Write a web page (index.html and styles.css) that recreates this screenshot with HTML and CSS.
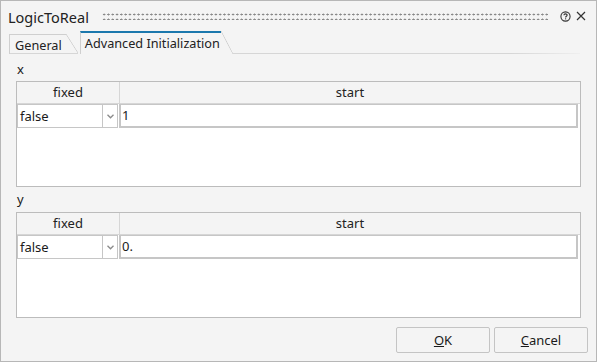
FILE: index.html
```html
<!DOCTYPE html>
<html lang="en">
<head>
  <meta charset="UTF-8">
  <title>LogicToReal</title>
  <link rel="stylesheet" href="styles.css">
</head>
<body>

  <div class="dialog">
    <div class="titlebar">
      <span class="title">LogicToReal</span>
      <span class="grip"></span>
      <svg class="help" width="11" height="11" viewBox="0 0 11 11">
        <circle cx="5.5" cy="5.5" r="4.6" fill="none" stroke="#333" stroke-width="1.1"/>
        <path d="M3.9 4.3 C3.9 3.3 4.6 2.9 5.5 2.9 C6.4 2.9 7.1 3.4 7.1 4.2 C7.1 5.2 5.6 5.3 5.6 6.4" fill="none" stroke="#333" stroke-width="1.1"/>
        <rect x="5.05" y="7.3" width="1.1" height="1.1" fill="#333"/>
      </svg>
      <svg class="close" width="10" height="10" viewBox="0 0 10 10">
        <path d="M1 1 L9 9 M9 1 L1 9" stroke="#333" stroke-width="1.2"/>
      </svg>
    </div>

    <div class="tabs">
      <div class="tab">General</div>
      <div class="tab active">Advanced Initialization</div>
      <div class="tabline"></div>
    </div>

    <div class="content">
      <div class="section">
        <div class="label">x</div>
        <div class="table">
          <div class="thead">
            <div class="th">fixed</div>
            <div class="th">start</div>
          </div>
          <div class="tr">
            <div class="combo">
              <span class="combo-text">false</span>
              <span class="combo-arrow">
                <svg width="7" height="5" viewBox="0 0 7 5"><path d="M0.5 0.8 L3.5 3.8 L6.5 0.8" fill="none" stroke="#8a8a8a" stroke-width="1.3"/></svg>
              </span>
            </div>
            <div class="input">1</div>
          </div>
        </div>
      </div>

      <div class="section">
        <div class="label">y</div>
        <div class="table">
          <div class="thead">
            <div class="th">fixed</div>
            <div class="th">start</div>
          </div>
          <div class="tr">
            <div class="combo">
              <span class="combo-text">false</span>
              <span class="combo-arrow">
                <svg width="7" height="5" viewBox="0 0 7 5"><path d="M0.5 0.8 L3.5 3.8 L6.5 0.8" fill="none" stroke="#8a8a8a" stroke-width="1.3"/></svg>
              </span>
            </div>
            <div class="input">0.</div>
          </div>
        </div>
      </div>
    </div>

    <div class="buttons">
      <button><u>O</u>K</button>
      <button><u>C</u>ancel</button>
    </div>
  </div>

</body>
</html>
```

FILE: styles.css
```css
body {
  margin: 0;
  font-family: "Noto Sans", "Liberation Sans", sans-serif;
  font-size: 13px;
  color: #1a1a1a;
}

.dialog {
  width: 597px;
  height: 362px;
  box-sizing: border-box;
  border: 1px solid #b7b7b7;
  background: #f4f4f4;
  display: flex;
  flex-direction: column;
}

.titlebar {
  height: 30px;
  display: flex;
  align-items: center;
  padding: 0 10px 0 7px;
}

.title {
  font-size: 14.5px;
  color: #222;
  margin-top: 2px;
}

.grip {
  flex: 1;
  height: 7px;
  margin: 1px 12px 0 13px;
  background-image: radial-gradient(circle, #888 0.9px, transparent 1.1px);
  background-size: 4.3px 5px;
  background-position: 0 -1px;
}

.help {
  margin-right: 5px;
}

.tabs {
  height: 23px;
  display: flex;
  align-items: flex-end;
  padding-left: 8px;
  padding-right: 16px;
}

.tab {
  position: relative;
  height: 19px;
  line-height: 20px;
  padding: 0 4px 0 5px;
  border: 1px solid #cfcfcf;
  border-right: none;
  border-bottom: none;
  margin-right: 14px;
  color: #222;
  font-size: 12.7px;
  box-shadow: inset 0 -1px 0 #d6d6d6;
}

.tab::after {
  content: "";
  position: absolute;
  top: -1px;
  right: -12px;
  width: 12px;
  height: 20px;
  background: linear-gradient(to top right, transparent calc(50% - 0.7px), #cfcfcf 50%, transparent calc(50% + 0.7px));
  border-bottom: 1px solid #d6d6d6;
  box-sizing: border-box;
}

.tab.active {
  height: 21px;
  line-height: 21px;
  border-top: 2px solid #1b78ad;
  box-shadow: none;
  margin-right: 12px;
  padding-left: 4px;
  padding-right: 1px;
}

.tab.active::after {
  top: -2px;
  height: 23px;
  border-bottom: none;
}

.tabline {
  flex: 1;
  height: 1px;
  background: linear-gradient(to right, #d6d6d6 80%, #efefef);
}

.content {
  flex: 1;
  padding: 0 15px 0 15px;
}

.label {
  height: 27px;
  line-height: 30px;
  padding-left: 1px;
  box-sizing: border-box;
}

.section + .section .label {
  height: 25px;
  line-height: 25px;
}

.table {
  height: 106px;
  box-sizing: border-box;
  border: 1px solid #bcbcbc;
  background: #fff;
}

.thead {
  display: grid;
  grid-template-columns: 102px 1fr;
  height: 21px;
  background: #f4f4f4;
  border-bottom: 1px solid #d6d6d6;
}

.th {
  text-align: center;
  line-height: 21px;
  color: #222;
}

.th + .th {
  border-left: 1px solid #d6d6d6;
}

.tr {
  display: grid;
  grid-template-columns: 102px 1fr;
  height: 24px;
  padding-right: 2px;
}

.combo {
  display: flex;
  border: 1px solid #c6c6c6;
  margin-right: 1px;
}

.combo-text {
  flex: 1;
  line-height: 22px;
  padding-left: 2px;
}

.combo-arrow {
  width: 14px;
  border-left: 1px solid #c6c6c6;
  display: flex;
  align-items: center;
  justify-content: center;
}

.input {
  border: 2px solid #c6c6c6;
  border-top-width: 1px;
  line-height: 21px;
  padding-left: 1px;
}

.buttons {
  display: flex;
  justify-content: flex-end;
  gap: 4px;
  padding: 0 8px 8px 0;
}

button {
  width: 94px;
  height: 26px;
  font-family: inherit;
  font-size: 13px;
  color: #1a1a1a;
  background: #f4f4f4;
  border: 1px solid #c4c4c4;
  border-radius: 2px;
  padding: 0;
}
```
